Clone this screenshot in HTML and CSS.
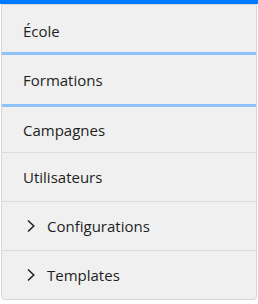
FILE: index.html
```html
<!DOCTYPE html>
<html>
<head>
  <meta charset="UTF-8"/>
  <title>Menu</title>
  <link rel="stylesheet" href="styles.css">
</head>
<body>
  <div class="topbar"></div>
  <div class="menu">
    <div class="menu-item first">École</div>
    <div class="menu-item selected">Formations</div>
    <div class="menu-item after-selected">Campagnes</div>
    <div class="menu-item">Utilisateurs</div>
    <div class="menu-item group">
      <svg class="chevron" width="10" height="14" viewBox="0 0 10 14"><path d="M2 1.5 L7.8 7 L2 12.5" fill="none" stroke="#1e1e1e" stroke-width="1.5"/></svg>
      <span>Configurations</span>
    </div>
    <div class="menu-item group last">
      <svg class="chevron" width="10" height="14" viewBox="0 0 10 14"><path d="M2 1.5 L7.8 7 L2 12.5" fill="none" stroke="#1e1e1e" stroke-width="1.5"/></svg>
      <span>Templates</span>
    </div>
  </div>
</body>
</html>
```

FILE: styles.css
```css
html, body {
  margin: 0;
  padding: 0;
  border: 0;
}
body {
  background-color: #fff;
  font-family: "Open Sans", "Noto Sans", sans-serif;
  font-size: 15px;
  color: #1e1e1e;
}

.topbar {
  height: 4px;
  background-color: #007bff;
}

.menu {
  margin: 0 1px 0 1px;
  border: 1px solid #d6d6d6;
  border-radius: 0 0 4px 4px;
  background-color: #f0f0f0;
}

.menu-item {
  display: flex;
  align-items: center;
  height: 48px;
  padding-left: 21px;
  border-bottom: 1px solid #dcdcdc;
}
.menu-item.first {
  height: 47px;
  padding-top: 4px;
  box-sizing: border-box;
  border-bottom: 0;
}
.menu-item.selected {
  height: 49px;
  border-top: 3px solid #8ec2fb;
  border-bottom: 3px solid #8ec2fb;
}
.menu-item.after-selected {
  height: 45px;
}
.menu-item.last {
  border-bottom: 0;
}

.menu-item.group {
  padding-left: 24px;
}
.chevron {
  margin-right: 11px;
}
```
